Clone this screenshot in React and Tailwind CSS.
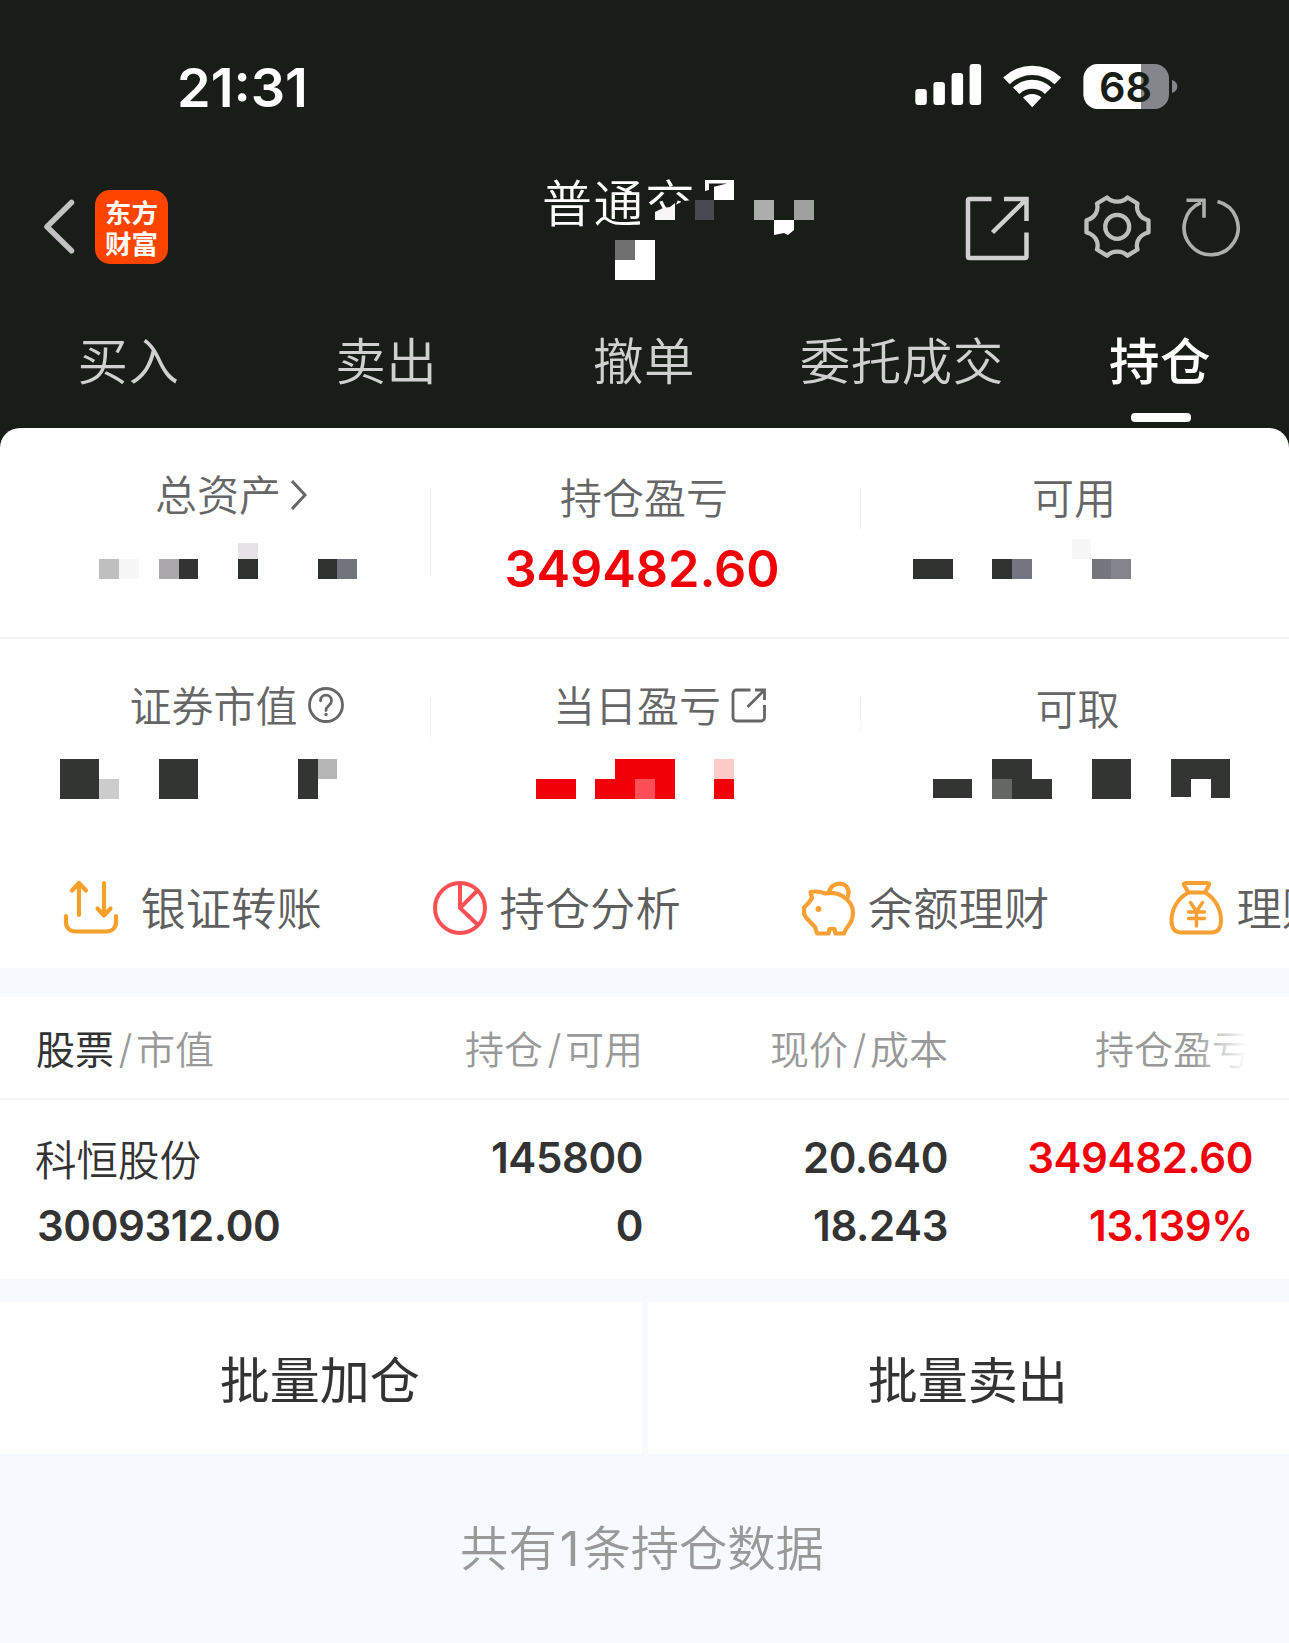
import React from 'react';

const tabs = ['买入', '卖出', '撤单', '委托成交', '持仓'];

// masked values: [x, y, width, height, fill] inside a 430x40 cell
const masks = {
  total: [
    [99, 20, 20, 20, '#bfbfbf'],
    [119, 20, 20, 20, '#f7f7f7'],
    [159, 20, 20, 20, '#aba8ac'],
    [179, 20, 19, 20, '#333333'],
    [238, 4, 20, 16, '#e6e2e8'],
    [238, 20, 20, 20, '#2f332f'],
    [318, 20, 19, 20, '#2f332f'],
    [337, 20, 20, 20, '#72747d'],
  ],
  available: [
    [54, 20, 40, 20, '#2f332f'],
    [133, 20, 20, 20, '#2f332f'],
    [153, 20, 20, 20, '#737680'],
    [213, 0, 19, 20, '#f7f7f7'],
    [233, 20, 19, 20, '#757680'],
    [252, 20, 20, 20, '#84858c'],
  ],
  market: [
    [60, 0, 39, 40, '#323532'],
    [99, 20, 20, 20, '#cccccc'],
    [159, 0, 39, 40, '#323532'],
    [298, 0, 20, 40, '#323532'],
    [318, 0, 19, 20, '#b5b5b5'],
  ],
  today: [
    [106, 20, 40, 20, '#f20008'],
    [165, 20, 20, 20, '#f20008'],
    [185, 0, 60, 40, '#f20008'],
    [205, 20, 20, 20, '#ff4e57'],
    [284, 0, 20, 20, '#fccbc5'],
    [284, 20, 20, 20, '#f20008'],
  ],
  withdraw: [
    [74, 20, 39, 19, '#323532'],
    [133, 0, 40, 20, '#323532'],
    [133, 20, 20, 20, '#646863'],
    [153, 20, 40, 20, '#323532'],
    [233, 0, 39, 40, '#323532'],
    [312, 0, 59, 20, '#323532'],
    [312, 20, 20, 18, '#323532'],
    [352, 20, 19, 19, '#323532'],
  ],
};

function Mask({ cells }) {
  return (
    <svg width="430" height="40" viewBox="0 0 430 40" shapeRendering="crispEdges" className="shrink-0">
      {cells.map(([x, y, w, h, fill], i) => (
        <rect key={i} x={x} y={y} width={w} height={h} fill={fill} />
      ))}
    </svg>
  );
}

function StatusBar() {
  return (
    <div className="h-[150px] pt-[58px] pl-[177px] pr-[111px] flex justify-between items-start">
      <div className="text-[54px] leading-[60px] font-semibold [font-feature-settings:'case']">21:31</div>
      <svg width="264" height="46" viewBox="914 64 264 46" className="mt-[6px]">
        <g fill="#fff">
          <rect x="915.3" y="89" width="11.5" height="16" rx="3" />
          <rect x="933.4" y="82" width="11.5" height="23" rx="3" />
          <rect x="951.6" y="73" width="11.5" height="32" rx="3" />
          <rect x="969.6" y="64" width="11.5" height="41" rx="3" />
          <path d="M1003.2 77.6a41.5 41.5 0 0 1 58 0l-6.6 6.6a32 32 0 0 0-44.8 0z" />
          <path d="M1013 87.6a27.5 27.5 0 0 1 38.4 0l-6.5 6.3a18.5 18.5 0 0 0-25.4 0z" />
          <path d="M1023 97.6a13.5 13.5 0 0 1 18.4 0l-9.2 9.6z" />
        </g>
        <clipPath id="battery">
          <rect x="1083.5" y="64" width="85.5" height="45" rx="14.5" />
        </clipPath>
        <g clipPath="url(#battery)">
          <rect x="1083" y="64" width="87" height="45" fill="#85868b" />
          <rect x="1083" y="64" width="58" height="45" fill="#fff" />
        </g>
        <path d="M1172 80c3.5 1 5.3 3.5 5.3 6.5s-1.8 5.5-5.3 6.5z" fill="#85868b" />
        <text x="1125.5" y="101.5" textAnchor="middle" fontSize="41.5" fontWeight="600" fill="#181d18">68</text>
      </svg>
    </div>
  );
}

function TitleBar() {
  return (
    <div className="h-[140px] pl-[42px] flex items-start">
      <div className="flex pt-[40px]">
        <svg width="34" height="74" viewBox="0 0 34 74" fill="none" stroke="#c2c2c2" strokeWidth="5.5" strokeLinecap="round" strokeLinejoin="round">
          <path d="M29.5 12.5 5 36.8l24.5 24" />
        </svg>
        <div className="ml-[19px] w-[73px] h-[74px] rounded-[15px] bg-[#ff4400] pt-[6px] text-center text-[26.5px] leading-[31px] font-bold font-['Noto_Sans_CJK_SC',sans-serif]">
          东方
          <br />
          财富
        </div>
      </div>
      <div className="relative w-[282px] h-[140px] ml-[365px]">
        <div className="pl-[9px] pt-[14px] text-[50px] leading-[72px] tracking-[1.5px] font-[350] font-['Noto_Sans_CJK_SC',sans-serif]">普通交</div>
        {/* account name is masked out */}
        <svg width="282" height="140" viewBox="533 150 282 140" className="absolute left-0 top-0">
          <path d="M640 207l15 5 20-7 9-4 8-1h10v41h-62z" fill="#181d18" />
          <path d="M655 212l8-4 7-1 5-4v17h-20z" fill="#f8f6f7" />
          <rect x="695" y="200" width="19" height="20" fill="#474a50" />
          <path d="M705 180h29v20h-20v-13h-5v3l-4 1zM709 183.500v3.500h4l14-3.500z" fill="#fff" fillRule="evenodd" />
          <rect x="754" y="200" width="20" height="20" fill="#adadad" />
          <rect x="794" y="200" width="20" height="20" fill="#a0a0a0" />
          <path d="M774 220h20v10l-6 5-4-2-10 2z" fill="#fff" />
          <path d="M615 240h40v40h-40z" fill="#fff" />
          <rect x="615" y="240" width="20" height="20" fill="#707070" />
        </svg>
      </div>
      <svg width="279" height="74" viewBox="964 190 279 74" className="mt-[40px] ml-[149px]" fill="none" stroke="#d0d0d0">
        <g strokeWidth="4.5">
          <path d="M991.5 199h-22a1.5 1.5 0 0 0-1.5 1.5v56a1.5 1.5 0 0 0 1.5 1.5h55.5a1.5 1.5 0 0 0 1.5-1.5V232.5" />
          <path d="M1004 199h22.5v22M1026 199.5l-33.5 33" />
        </g>
        <g strokeWidth="4.3" strokeLinejoin="round" stroke="#bdbfbd">
          <path d="M1107 197.5c5 5.5 15.5 5.5 20.5 0l10 6c-2 8 2.5 14.5 11 16.8v12.2c-8.500 2-13.500 9-11 17l-10 6.200c-5-5.500-15.500-5.500-20.500 0l-10-6.200c2.500-8-2.500-15-10.500-17v-12.200c8-2.300 12.500-8.800 10.500-16.800z" />
          <circle cx="1117.2" cy="226.8" r="12" />
        </g>
        <g strokeWidth="3.6" stroke="#adafad">
          <path d="M1217.5 201.5a27 27 0 1 1-16.5 1.2" />
          <path d="M1186.5 200.3h17.5v17.5" />
        </g>
      </svg>
    </div>
  );
}

function Tabs() {
  return (
    <div className="h-[138px] grid grid-cols-5 text-center text-[50.5px] leading-[72px] tracking-[0.5px] font-['Noto_Sans_CJK_SC',sans-serif]">
      {tabs.map((tab) =>
        tab === '持仓' ? (
          <div key={tab} className="pt-[32px] font-medium text-white flex flex-col items-center">
            {tab}
            <div className="mt-[19px] ml-[2px] w-[60px] h-[9px] rounded-[4px] bg-white" />
          </div>
        ) : (
          <div key={tab} className="pt-[32px] pr-px font-[350] text-[#d0d0d0]">{tab}</div>
        )
      )}
    </div>
  );
}

function Label({ className, children }) {
  return (
    <div className={`h-[60px] flex items-center justify-center text-[42px] leading-[60px] font-[350] text-[#666] font-['Noto_Sans_CJK_SC',sans-serif] ${className}`}>
      {children}
    </div>
  );
}

function Overview() {
  return (
    <>
      <div className="h-[211px] grid grid-cols-[431px_430px_428px] border-b-2 border-[#f3f3f5]">
        <div className="relative">
          <Label className="mt-[35px] pl-[33px]">
            总资产
            <svg width="20" height="36" viewBox="0 0 20 36" className="ml-[8px] mt-[3px]" fill="none" stroke="#666" strokeWidth="3">
              <path d="M3 4l13 14L3 32" />
            </svg>
          </Label>
          <div className="mt-[16px]"><Mask cells={masks.total} /></div>
          <div className="absolute right-0 top-[60px] w-px h-[88px] bg-[#eeeeee]" />
        </div>
        <div className="relative">
          <Label className="mt-[38px] pr-[4px]">持仓盈亏</Label>
          <div className="mt-[13px] pr-[8px] text-center text-[50.5px] leading-[60px] tracking-[-0.1px] font-semibold text-[#f20008]">349482.60</div>
          <div className="absolute right-0 top-[60px] w-px h-[42px] bg-[#eeeeee]" />
        </div>
        <div className="-ml-[2px]">
          <Label className="mt-[38px]">可用</Label>
          <div className="mt-[13px]"><Mask cells={masks.available} /></div>
        </div>
      </div>
      <div className="h-[211px] grid grid-cols-[431px_430px_428px]">
        <div className="relative">
          <Label className="mt-[35px] pl-[43px]">
            证券市值
            <svg width="38" height="38" viewBox="0 0 38 38" className="ml-[9px] mt-[2px]" fill="none" stroke="#666" strokeWidth="2.8">
              <circle cx="19" cy="19" r="16.5" />
              <path d="M13.5 14.8c0-7.5 11-7.5 11 0 0 4.5-5.5 5-5.5 9.7" strokeLinecap="round" />
              <circle cx="19" cy="28.5" r="1" fill="#666" strokeWidth="1.5" />
            </svg>
          </Label>
          <div className="mt-[25px]"><Mask cells={masks.market} /></div>
          <div className="absolute right-0 top-[58px] w-px h-[42px] bg-linear-to-b from-[#eeeeee] to-[#f8f8f8]" />
        </div>
        <div className="relative">
          <Label className="mt-[35px] pl-[28px]">
            当日盈亏
            <svg width="36" height="36" viewBox="0 0 36 36" className="ml-[10px] mt-[2px]" fill="none" stroke="#666" strokeWidth="2.8">
              <path d="M19.5 3H5.5A3.5 3.5 0 0 0 2 6.5v24A3.5 3.5 0 0 0 5.5 34H30a3.5 3.5 0 0 0 3.5-3.5V18" />
              <path d="M24 3h9.5v10M33 3.5L16.5 20" />
            </svg>
          </Label>
          <div className="mt-[25px] -ml-px"><Mask cells={masks.today} /></div>
          <div className="absolute right-0 top-[58px] w-px h-[36px] bg-linear-to-b from-[#eeeeee] to-[#f8f8f8]" />
        </div>
        <div className="-ml-[2px]">
          <Label className="mt-[38px] pl-[7px]">可取</Label>
          <div className="mt-[22px]"><Mask cells={masks.withdraw} /></div>
        </div>
      </div>
    </>
  );
}

function TransferIcon() {
  return (
    <svg width="56" height="56" viewBox="0 0 56 56" fill="none" stroke="#f5a02a" strokeWidth="4.2" strokeLinecap="round" strokeLinejoin="round" className="shrink-0">
      <path d="M16 35V4M9 10.5L16 3l7 7.5" />
      <path d="M41 3v32M34.5 28.5L41 35.5l6.5-7" />
      <path d="M3 36v6c0 6 4 9.5 10 9.5h30c6 0 10-3.5 10-9.5v-6" />
    </svg>
  );
}

function PieIcon() {
  return (
    <svg width="56" height="56" viewBox="0 0 56 56" fill="none" stroke="#fa5054" strokeWidth="4" className="shrink-0">
      <circle cx="28" cy="28" r="25" />
      <path d="M28 3v25l18.5 17.5M28 28l18-18" />
    </svg>
  );
}

function PiggyIcon() {
  return (
    <svg width="56" height="56" viewBox="0 0 56 56" fill="none" stroke="#f8a034" strokeWidth="4.2" strokeLinejoin="round" className="shrink-0">
      <path d="M10.5 12c5-1 10-.5 15 1.5 6-1.5 12-.5 17 2.5 8 5 10.5 11 10.5 17 0 7-4 12.5-7 16l-2 4.5h-8.5l-1-4.500h-5l-1 4.500H17l-2-6.500L6 37.500 4 34v-6.500l4.500-4.500 3.500-5z" />
      <path d="M29 12.5C31 .5 49 .5 48.5 13c0 2-.5 4-1.5 6" />
      <circle cx="18.5" cy="29" r="3" fill="#f8a034" stroke="none" />
    </svg>
  );
}

function MoneyBagIcon() {
  return (
    <svg width="56" height="56" viewBox="0 0 56 56" fill="none" stroke="#f8a034" strokeWidth="4" strokeLinejoin="round" strokeLinecap="round" className="shrink-0">
      <path d="M19.5 12.5L15 5c-.5-1 0-2 1.5-2h22c1.5 0 2 1 1.5 2l-4 7.5z" />
      <path d="M19.5 12.5C9 18 2.5 29 2.5 40c0 8.5 3.5 12.5 9.5 12.5h30.5c6 0 9.5-4 9.5-12.5 0-11-6-22-16-27.5" />
      <g strokeWidth="3.5">
        <path d="M21.5 22.5l6 9 6-9M27.5 32v14M19.5 32h16M19.5 38.5h16" />
      </g>
    </svg>
  );
}

const actions = [
  { label: '银证转账', Icon: TransferIcon, gap: 'ml-[21.5px]' },
  { label: '持仓分析', Icon: PieIcon, gap: 'ml-[12px]' },
  { label: '余额理财', Icon: PiggyIcon, gap: 'ml-[12px]' },
  { label: '理财', Icon: MoneyBagIcon, gap: 'ml-[12px]' },
];

function Actions() {
  return (
    <div className="h-[118px] pl-[63px] pt-[30px] flex overflow-hidden">
      {actions.map(({ label, Icon, gap }) => (
        <div key={label} className="w-[368.5px] shrink-0 flex">
          <Icon />
          <span className={`${gap} -mt-[4px] text-[45.3px] leading-[60px] whitespace-nowrap font-[350] text-[#5f5f5f] font-['Noto_Sans_CJK_SC',sans-serif]`}>
            {label}
          </span>
        </div>
      ))}
    </div>
  );
}

function Slash() {
  return <span className="inline-block w-[22px] pl-px text-center font-['Inter',sans-serif] font-light text-[40px]">/</span>;
}

function Holdings() {
  return (
    <div className="bg-white">
      <div className="h-[103px] border-b-2 border-[#f2f3f5] pt-[20px] pl-[36px] pr-[36px] grid grid-cols-[300px_307px_305px_1fr] text-right text-[39px] leading-[60px] font-[350] text-[#999] font-['Noto_Sans_CJK_SC',sans-serif]">
        <div className="text-left">
          <span className="font-normal text-[#333]">股票</span><Slash />市值
        </div>
        <div>持仓<Slash />可用</div>
        <div>现价<Slash />成本</div>
        <div className="relative pl-[147px] text-left whitespace-nowrap">
          持仓盈亏
          <div className="absolute right-0 top-0 w-[60px] h-[60px] bg-linear-to-r from-white/0 to-white to-90%" />
        </div>
      </div>
      <div className="h-[179px] pt-[24px] pl-[35px] pr-[36px] grid grid-cols-[301px_307px_305px_1fr] auto-rows-[68px] text-right text-[42px] leading-[68px] tracking-[-0.4px] font-semibold text-[#333]">
        <div className="text-left text-[41.5px] tracking-normal font-[350] font-['Noto_Sans_CJK_SC',sans-serif]">科恒股份</div>
        <div>145800</div>
        <div>20.640</div>
        <div className="text-[#f20008]">349482.60</div>
        <div className="text-left pl-[2px]">3009312.00</div>
        <div>0</div>
        <div>18.243</div>
        <div className="text-[#f20008]">13.139%</div>
      </div>
    </div>
  );
}

export default function App() {
  return (
    <div className="w-[1289px] h-[1643px] overflow-hidden bg-[#f6faff] font-['Inter','Noto_Sans_CJK_SC',sans-serif]">
      <div className="bg-[#181d18]">
        <div className="text-white">
          <StatusBar />
          <TitleBar />
          <Tabs />
        </div>
        <div className="bg-white rounded-t-[20px]">
          <Overview />
          <Actions />
        </div>
      </div>
      <div className="h-[29px]" />
      <Holdings />
      <div className="mt-[23px] grid grid-cols-2 gap-[6px] text-center text-[50px] leading-[72px] text-[#333] font-['Noto_Sans_CJK_SC',sans-serif]">
        <div className="h-[152px] pt-[39px] pr-[2px] bg-white">批量加仓</div>
        <div className="h-[152px] pt-[39px] pr-px bg-white">批量卖出</div>
      </div>
      <div className="mt-[55px] pr-[5px] text-center text-[48.3px] leading-[72px] font-[350] text-[#999] font-['Noto_Sans_CJK_SC',sans-serif]">
        共有<span className="px-[3px] font-['Inter',sans-serif] font-normal">1</span>条持仓数据
      </div>
    </div>
  );
}
